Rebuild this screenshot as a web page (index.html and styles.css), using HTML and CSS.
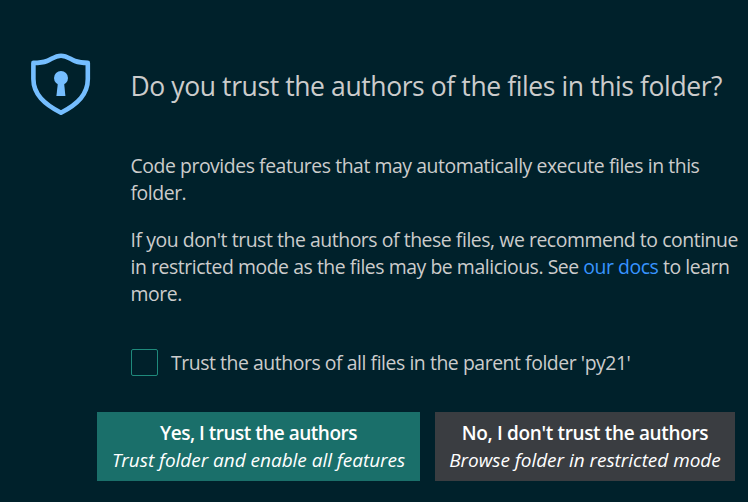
FILE: index.html
```html
<!DOCTYPE html>
<html lang="en">
<head>
<meta charset="utf-8">
<title>Workspace Trust</title>
<link rel="stylesheet" href="styles.css">
</head>
<body>
<main class="dialog">
  <div class="message-row">
    <svg class="shield" viewBox="0 0 62 64" fill="none">
      <path d="M31 3.700C25 3.700 22 7 17 9C12.500 10.700 8 10.900 3.400 10.900V27C3.400 42 14 52 31 60.700C48 52 57.800 42 57.800 27V10.900C54 10.900 49.500 10.700 45 9C40 7 37 3.700 31 3.700Z" stroke="#75beff" stroke-width="4.600" stroke-linejoin="round"/>
      <circle cx="31" cy="26" r="7" fill="#75beff"/>
      <path d="M28 30H34L35.400 44H26.400Z" fill="#75beff"/>
    </svg>
    <div class="content">
      <h1>Do you trust the authors of the files in this folder?</h1>
      <p>Code provides features that may automatically execute files in this<br>folder.</p>
      <p>If you don't trust the authors of these files, we recommend to continue<br>in restricted mode as the files may be malicious. See <a>our docs</a> to learn<br>more.</p>
      <label class="check"><span class="box"></span><span>Trust the authors of all files in the parent folder 'py21'</span></label>
    </div>
  </div>
  <div class="buttons">
    <button class="yes"><b>Yes, I trust the authors</b><i>Trust folder and enable all features</i></button>
    <button class="no"><b>No, I don't trust the authors</b><i>Browse folder in restricted mode</i></button>
  </div>
</main>
</body>
</html>
```
FILE: styles.css
```css
* { box-sizing: border-box; }
body { margin: 0; background: #00212b; color: #cccccc; font: 19.4px/27px "Open Sans", "Noto Sans", sans-serif; overflow: hidden; }
.dialog { width: 748px; height: 502px; padding-top: 52px; }
.message-row { display: flex; height: 360px; }
.shield { width: 62px; height: 64px; margin-left: 30px; flex: none; }
.content { margin-left: 38.5px; white-space: nowrap; letter-spacing: -0.44px; }
h1 { margin: 15px 0 47px; font-size: 26.5px; line-height: 38px; font-weight: 400; letter-spacing: -0.4px; }
p { margin: 0 0 20px; height: 54px; }
p + p { height: 81px; }
a { color: #3794ff; }
.check { display: flex; align-items: flex-start; margin-top: 42px; }
.box { width: 27px; height: 27px; margin: 0 13px 0 0.5px; border: 1px solid #1f8a7c; border-radius: 2px; }
.buttons { display: flex; gap: 15px; padding-left: 97px; }
button { height: 69px; border: 0; padding: 8px 0; color: #fff; font: inherit; font-size: 19px; display: flex; flex-direction: column; align-items: center; white-space: nowrap; }
.yes { width: 323px; background: #1a6f6a; }
.no { width: 300px; background: #3a3d41; }
b { font-weight: 600; letter-spacing: -0.5px; }
.no b { letter-spacing: -0.35px; }
i { letter-spacing: -0.03px; }
```
